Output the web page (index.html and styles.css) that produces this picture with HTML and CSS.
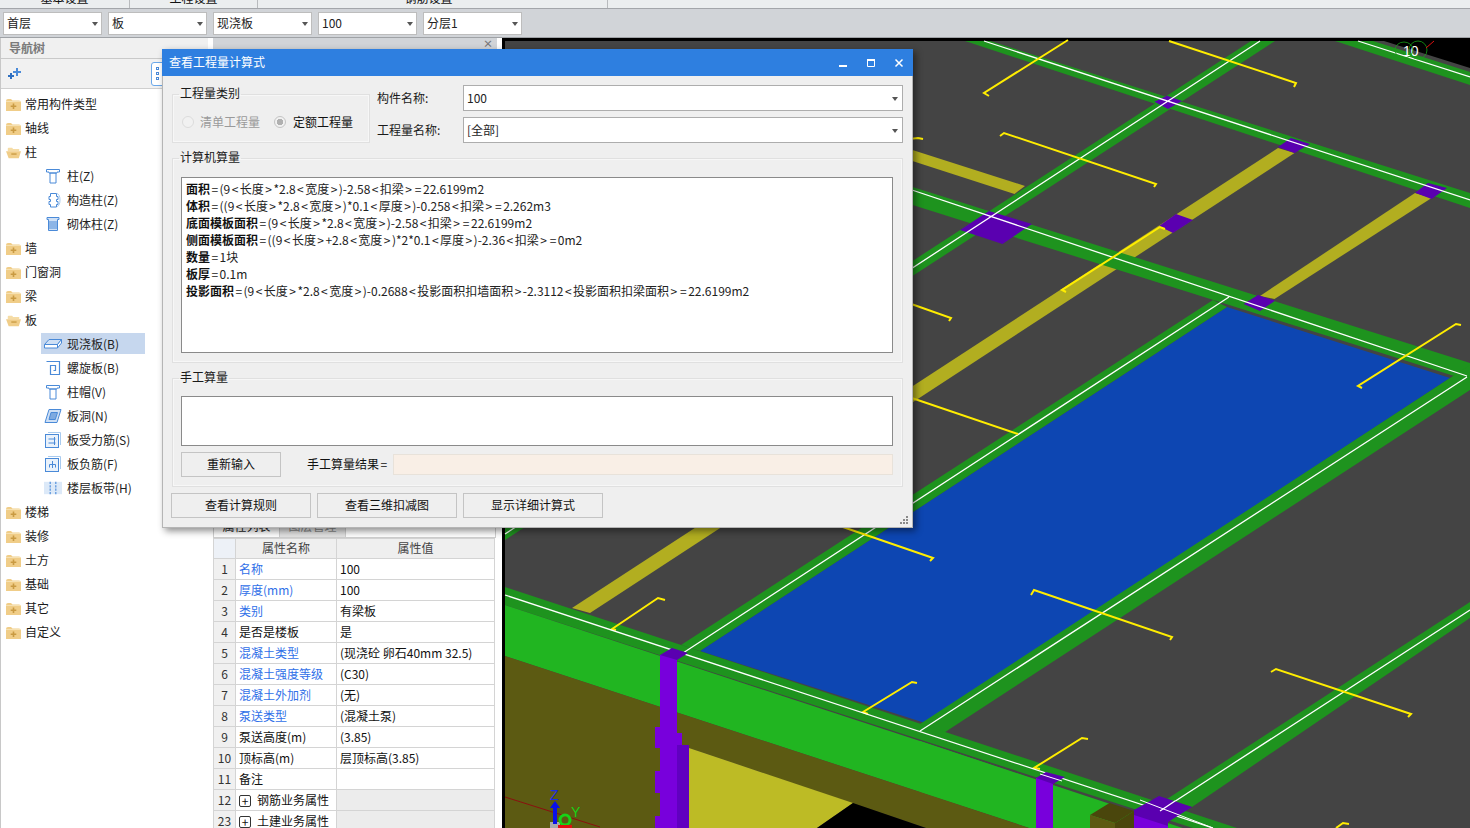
FILE: index.html
```html
<!DOCTYPE html>
<html lang="zh">
<head>
<meta charset="utf-8">
<title>查看工程量计算式</title>
<link rel="stylesheet" href="styles.css">
</head>
<body>
<svg class="defs" width="0" height="0" aria-hidden="true">
  <symbol id="fc" viewBox="0 0 15 13"><path d="M0 3q0-2 2-2h3l1.500 1.500H13q2 0 2 2V13H0z" fill="#f0cd88"/><path d="M0 4h15V3.200H0z" fill="#f8e6bd"/><path d="M6.700 5.500h1.600v2h2v1.600h-2v2H6.700v-2h-2V7.500h2z" fill="#c99a42"/></symbol>
  <symbol id="fo" viewBox="0 0 17 13"><path d="M2 2q0-1 1-1h4l1 1.500h7V5H2z" fill="#f5dca6"/><path d="M0 5h17l-2.500 8H3z" fill="#f0cd88"/><path d="M6 7.500h6v1.500H6z" fill="#c99a42"/></symbol>
  <symbol id="i-col" viewBox="0 0 16 16"><path d="M1.500 1.500h13v2.500h-2.500v1h-8V4H1.500zM5 5h6v10H5z" fill="#fff" stroke="#4a8ad8"/></symbol>
  <symbol id="i-gz" viewBox="0 0 16 16"><path d="M12 1.500q3 1 3 6.500t-3 6.500" fill="none" stroke="#a9cbef"/><path d="M5.500 1.500h6v3h1.500v3h-1.500v2h1.500v3h-1.500v2.500h-6v-2.500H4v-3h1.500v-2H4v-3h1.500z" fill="#fff" stroke="#4a8ad8"/></symbol>
  <symbol id="i-qt" viewBox="0 0 16 16"><path d="M2 1.500h12v2h-1.500v11h-9v-11H2z" fill="#cfe0f5" stroke="#4a8ad8"/><path d="M4 6h8M4 8h8M4 10h8M4 12h8" stroke="#4a8ad8"/></symbol>
  <symbol id="i-plate" viewBox="0 0 18 16"><path d="M.5 8.500 5 3.500h12.500l-4 5z" fill="#cfe0f5" stroke="#4a8ad8"/><path d="M.5 8.500h13v3.500H.5zM13.500 8.500l4-5v3.500l-4 5z" fill="#fff" stroke="#4a8ad8"/></symbol>
  <symbol id="i-spiral" viewBox="0 0 16 16"><path d="M1.500 1.500h13v13h-9v-9h5v5h-2" fill="none" stroke="#4a8ad8" stroke-width="1.200"/></symbol>
  <symbol id="i-hole" viewBox="0 0 18 16"><path d="M5 1.500h12l-4 13H1z" fill="#cfe0f5" stroke="#4a8ad8"/><path d="M7 4.500h6.500l-2.200 7H5z" fill="#7eaae0" stroke="#4a8ad8"/></symbol>
  <symbol id="i-rebar" viewBox="0 0 16 16"><path d="M3 .5h12.500v12.500" fill="none" stroke="#a9cbef"/><rect x=".5" y="2.500" width="13" height="13" fill="#eaf2fb" stroke="#4a8ad8"/><path d="M3.500 7h7M3.500 11h7M9.500 5v8" fill="none" stroke="#4a8ad8"/></symbol>
  <symbol id="i-neg" viewBox="0 0 16 16"><path d="M3 .5h12.500v12.500" fill="none" stroke="#a9cbef"/><rect x=".5" y="2.500" width="13" height="13" fill="#eaf2fb" stroke="#4a8ad8"/><path d="M7.500 5v7M4.500 8.500h6M4.500 8.500v3M10.500 8.500v3" fill="none" stroke="#4a8ad8"/></symbol>
  <symbol id="i-band" viewBox="0 0 16 14"><rect x="0" y="1.500" width="16" height="11" fill="#dce9f8"/><path d="M5.500 1.500v11M10.500 1.500v11" stroke="#4a8ad8" stroke-dasharray="2 1"/></symbol>
</svg>

<div class="tabs">
  <div class="tab tab-a">基本设置</div>
  <div class="tab tab-b">工程设置</div>
  <div class="tab tab-c">钢筋设置</div>
</div>

<div class="toolbar">
  <div class="combo"><span>首层</span><i class="arrow"></i></div>
  <div class="combo"><span>板</span><i class="arrow"></i></div>
  <div class="combo"><span>现浇板</span><i class="arrow"></i></div>
  <div class="combo"><span>100</span><i class="arrow"></i></div>
  <div class="combo"><span>分层1</span><i class="arrow"></i></div>
</div>

<div class="main">
  <nav class="nav">
    <div class="nav-head">导航树</div>
    <div class="nav-tools">
      <svg class="sparkle" width="14" height="12" viewBox="0 0 14 12"><path d="M9 0h2v3h3v2h-3v3H9V5H6V3h3z" fill="#4a8ad8"/><path d="M3 5h2v2h2v2H5v2H3V9H1V7h2z" fill="#2f6fc0"/></svg>
      <div class="nav-btn"><i></i><i></i><i></i></div>
    </div>
    <ul class="tree">
      <li class="row"><svg class="folder"><use href="#fc"/></svg>常用构件类型</li>
      <li class="row"><svg class="folder"><use href="#fc"/></svg>轴线</li>
      <li class="row"><svg class="folder"><use href="#fo"/></svg>柱</li>
      <li class="sub"><svg class="ico"><use href="#i-col"/></svg>柱(Z)</li>
      <li class="sub"><svg class="ico"><use href="#i-gz"/></svg>构造柱(Z)</li>
      <li class="sub"><svg class="ico"><use href="#i-qt"/></svg>砌体柱(Z)</li>
      <li class="row"><svg class="folder"><use href="#fc"/></svg>墙</li>
      <li class="row"><svg class="folder"><use href="#fc"/></svg>门窗洞</li>
      <li class="row"><svg class="folder"><use href="#fc"/></svg>梁</li>
      <li class="row"><svg class="folder"><use href="#fo"/></svg>板</li>
      <li class="sub sel"><svg class="ico"><use href="#i-plate"/></svg>现浇板(B)</li>
      <li class="sub"><svg class="ico"><use href="#i-spiral"/></svg>螺旋板(B)</li>
      <li class="sub"><svg class="ico"><use href="#i-col"/></svg>柱帽(V)</li>
      <li class="sub"><svg class="ico"><use href="#i-hole"/></svg>板洞(N)</li>
      <li class="sub"><svg class="ico"><use href="#i-rebar"/></svg>板受力筋(S)</li>
      <li class="sub"><svg class="ico"><use href="#i-neg"/></svg>板负筋(F)</li>
      <li class="sub"><svg class="ico"><use href="#i-band"/></svg>楼层板带(H)</li>
      <li class="row"><svg class="folder"><use href="#fc"/></svg>楼梯</li>
      <li class="row"><svg class="folder"><use href="#fc"/></svg>装修</li>
      <li class="row"><svg class="folder"><use href="#fc"/></svg>土方</li>
      <li class="row"><svg class="folder"><use href="#fc"/></svg>基础</li>
      <li class="row"><svg class="folder"><use href="#fc"/></svg>其它</li>
      <li class="row"><svg class="folder"><use href="#fc"/></svg>自定义</li>
    </ul>
  </nav>

  <section class="props">
    <div class="props-head"><span class="props-x">×</span></div>
    <div class="props-list"></div>
    <div class="props-tabs"><span class="ptab on">属性列表</span><span class="ptab">图层管理</span></div>
    <table class="grid">
      <colgroup><col class="c0"><col class="c1"><col class="c2"></colgroup>
      <thead><tr><th class="corner"></th><th>属性名称</th><th>属性值</th></tr></thead>
      <tbody>
        <tr><td class="n">1</td><td class="b">名称</td><td>100</td></tr>
        <tr><td class="n">2</td><td class="b">厚度(mm)</td><td>100</td></tr>
        <tr><td class="n">3</td><td class="b">类别</td><td>有梁板</td></tr>
        <tr><td class="n">4</td><td>是否是楼板</td><td>是</td></tr>
        <tr><td class="n">5</td><td class="b">混凝土类型</td><td>(现浇砼 卵石40mm 32.5)</td></tr>
        <tr><td class="n">6</td><td class="b">混凝土强度等级</td><td>(C30)</td></tr>
        <tr><td class="n">7</td><td class="b">混凝土外加剂</td><td>(无)</td></tr>
        <tr><td class="n">8</td><td class="b">泵送类型</td><td>(混凝土泵)</td></tr>
        <tr><td class="n">9</td><td>泵送高度(m)</td><td>(3.85)</td></tr>
        <tr><td class="n">10</td><td>顶标高(m)</td><td>层顶标高(3.85)</td></tr>
        <tr><td class="n">11</td><td>备注</td><td></td></tr>
        <tr><td class="n">12</td><td><span class="exp">+</span>钢筋业务属性</td><td class="g"></td></tr>
        <tr><td class="n">23</td><td><span class="exp">+</span>土建业务属性</td><td class="g"></td></tr>
      </tbody>
    </table>
  </section>

  <div class="view">
    <svg class="scene" width="968" height="790" viewBox="502 38 968 790">
      <rect x="502" y="38" width="968" height="790" fill="#000"/>
      <polygon points="505,41 1384,41 1470,68 1470,828 505,828" fill="#444"/>
      <polygon points="1227,307 1450,378 925,723 700,651" fill="#0d46b2"/>
      <g fill="#b2ae20">
        <polygon points="572,608 1278,148 1294.500,153 590,613"/>
        <polygon points="1260,296 1415,193 1431.600,198 1274.500,299"/>
        <polygon points="900,146 1025,186 1014.500,194 900,157"/>
      </g>
      <g fill="#1e931e">
        <polygon points="965,41 990,41 1470,193 1470,208"/>
        <polygon points="1335,41 1373,41 1470,72 1470,85"/>
        <polygon points="900,183 1470,363 1470,381 900,201"/>
        <polygon points="1251,41 1275,41 914,275 505,540 505,525 914,260"/>
        <polygon points="681,645 1213,300 1227,307 700,651"/>
        <polygon points="1450,378 1470,365 1470,390 936,738 920,724"/>
        <polygon points="1167,799 1470,602 1470,618 1192,807"/>
        <polygon points="505,587 1240,829 1236,842 505,605"/>
      </g>
      <g fill="#5a00b0">
        <polygon points="1154.500,101.700 1167,95.700 1182,101 1168,109"/>
        <polygon points="1278,147 1291,138 1310,144 1294.500,153"/>
        <polygon points="1415,192.700 1428,183 1447,188 1431.600,199"/>
        <polygon points="1159,226 1176,214 1193,220 1173,233"/>
        <polygon points="960,230 989,211 1032,224 1002.500,244"/>
        <polygon points="1243.600,304 1258,295 1275,300.700 1260,311"/>
      </g>
      <g stroke="#fff" stroke-width="1.300" fill="none">
        <path d="M984 41 1470 200M1358 41 1470 77M900 186 1467 376M505 534 1260 41M683 653 1229 297M920 731 1467 377M1160 811 1470 610"/>
      </g>
      <g stroke="#ffed00" stroke-width="2" fill="none">
        <polyline points="989,96 984,93 1068,40"/>
        <polyline points="1169,41 1296,83 1294,87"/>
        <polyline points="1000,136 1004,133 1156,184 1154,187"/>
        <polyline points="1066,292 1062,290 1160,227 1165,229"/>
        <polyline points="1362,388 1358,386 1456,324 1461,325"/>
        <polyline points="900,300 951,318 949,321"/>
        <polyline points="900,394 1018,434"/>
        <polyline points="900,140 918,138 923,139"/>
        <polyline points="616,630 612,629 658,598 665,600"/>
        <polyline points="868,714 863,712 912,682 917,683"/>
        <polyline points="1040,769 1034,768 1082,738 1088,739"/>
        <polyline points="840,526 933,558 930,561"/>
        <polyline points="1031,595 1034,590 1172,637 1170,640"/>
        <polyline points="1271,672 1276,669 1411,714 1408,717"/>
        <polyline points="1336,828 1343,823 1349,824"/>
      </g>
      <polygon points="505,605 920,741 1170,825 1240,848 1030,828 920,792 505,656" fill="#21b521"/>
      <polygon points="920,741 1240,847 1236,828 1030,828 920,792" fill="#21b521"/>
      <polygon points="505,656 920,792 1029,828 926,828 689,748 689,828 505,828" fill="#5c5a12"/>
      <polygon points="689,748 853,803 817,828 689,828" fill="#bdbb25"/>
      <polygon points="853,803 926,828 817,828" fill="#000"/>
      <path d="M505 595 1213 828" stroke="#fff" stroke-width="1.300" fill="none"/>
      <polygon points="1090,815 1109.500,803 1134,811 1115,823" fill="#4a460c"/>
      <polygon points="1090,815 1115,823 1115,828 1090,828" fill="#5c5a12"/>
      <polygon points="1115,823 1134,811 1134,828 1115,828" fill="#4a460c"/>
      <g fill="#7800dc">
        <rect x="660" y="655" width="17" height="173"/>
        <rect x="655" y="727" width="5" height="21"/>
        <rect x="655" y="771" width="5" height="22"/>
        <rect x="655" y="816" width="5" height="12"/>
        <rect x="677" y="733" width="5" height="12"/>
        <rect x="1036" y="778" width="17" height="50"/>
        <polygon points="1134,813 1168,823 1168,828 1134,828"/>
      </g>
      <rect x="677" y="745" width="12" height="83" fill="#6000c0"/>
      <g fill="#5a00b0">
        <polygon points="660,655 672,648 688,653 677,660"/>
        <polygon points="1036,778 1046,772 1065,777 1053,784"/>
        <polygon points="1134,810 1159,796 1192,807 1168,822 1168,826 1134,815"/>
      </g>
      <path d="M1040 774 1062 781M1140 800 1213 828" stroke="#fff" stroke-width="1" fill="none"/>
      <path d="M1160 811 1175 801" stroke="#fff" stroke-width="1.300" fill="none"/>
      <path d="M505 797 600 827" stroke="#8a1010" stroke-width="1" fill="none"/>
      <rect x="550" y="822" width="10" height="6" fill="#aaa"/>
      <path d="M553 824V808h-3l5-7 5 7h-3v16z" fill="#0a10e8"/>
      <ellipse cx="565" cy="820" rx="5" ry="5" fill="none" stroke="#17d317" stroke-width="3"/>
      <rect x="558" y="825" width="14" height="3" fill="#e01010"/>
      <text class="ax ax-z" x="550" y="800">Z</text>
      <text class="ax ax-y" x="571" y="817">Y</text>
      <text class="ax ax-n" x="1403" y="56">10</text>
      <ellipse cx="1404" cy="50" rx="9" ry="8" fill="none" stroke="#17a017" stroke-width=".8"/>
      <ellipse cx="1418" cy="50" rx="9" ry="9" fill="none" stroke="#17a017" stroke-width=".8"/>
      <path d="M1426 48 1434 41" stroke="#e01010" fill="none"/>
    </svg>
  </div>
</div>

<div class="dialog">
  <header class="dlg-title">
    <span>查看工程量计算式</span>
    <div class="win">
      <button class="win-b" aria-label="最小化"><svg width="10" height="10" viewBox="0 0 10 10"><rect x="1" y="7" width="8" height="2" fill="#fff"/></svg></button>
      <button class="win-b" aria-label="最大化"><svg width="10" height="10" viewBox="0 0 10 10"><path d="M1.500 2.500h7v6h-7z" fill="none" stroke="#fff"/><rect x="1" y="1" width="8" height="2" fill="#fff"/></svg></button>
      <button class="win-b" aria-label="关闭"><svg width="10" height="10" viewBox="0 0 10 10"><path d="M1.500 1.500l7 7M8.500 1.500l-7 7" stroke="#fff" stroke-width="1.500"/></svg></button>
    </div>
  </header>
  <div class="dlg-body">
    <div class="top-row">
      <fieldset class="grp grp-type">
        <legend>工程量类别</legend>
        <div class="radios">
          <span class="radio off"></span><span class="r-lab dim">清单工程量</span>
          <span class="radio on"></span><span class="r-lab">定额工程量</span>
        </div>
      </fieldset>
      <div class="fields">
        <label class="f-lab">构件名称:</label>
        <div class="select"><span>100</span><i class="arrow"></i></div>
        <label class="f-lab">工程量名称:</label>
        <div class="select"><span>[全部]</span><i class="arrow"></i></div>
      </div>
    </div>
    <fieldset class="grp grp-calc">
      <legend>计算机算量</legend>
      <div class="formula">
        <p><b>面积</b><i>=</i>(9<i>&lt;</i>长度<i>&gt;</i>*2.8<i>&lt;</i>宽度<i>&gt;</i>)-2.58<i>&lt;</i>扣梁<i>&gt;</i><i>=</i>22.6199m2</p>
        <p><b>体积</b><i>=</i>((9<i>&lt;</i>长度<i>&gt;</i>*2.8<i>&lt;</i>宽度<i>&gt;</i>)*0.1<i>&lt;</i>厚度<i>&gt;</i>)-0.258<i>&lt;</i>扣梁<i>&gt;</i><i>=</i>2.262m3</p>
        <p><b>底面模板面积</b><i>=</i>(9<i>&lt;</i>长度<i>&gt;</i>*2.8<i>&lt;</i>宽度<i>&gt;</i>)-2.58<i>&lt;</i>扣梁<i>&gt;</i><i>=</i>22.6199m2</p>
        <p><b>侧面模板面积</b><i>=</i>((9<i>&lt;</i>长度<i>&gt;</i>+2.8<i>&lt;</i>宽度<i>&gt;</i>)*2*0.1<i>&lt;</i>厚度<i>&gt;</i>)-2.36<i>&lt;</i>扣梁<i>&gt;</i><i>=</i>0m2</p>
        <p><b>数量</b><i>=</i>1块</p>
        <p><b>板厚</b><i>=</i>0.1m</p>
        <p><b>投影面积</b><i>=</i>(9<i>&lt;</i>长度<i>&gt;</i>*2.8<i>&lt;</i>宽度<i>&gt;</i>)-0.2688<i>&lt;</i>投影面积扣墙面积<i>&gt;</i>-2.3112<i>&lt;</i>投影面积扣梁面积<i>&gt;</i><i>=</i>22.6199m2</p>
      </div>
    </fieldset>
    <fieldset class="grp grp-manual">
      <legend>手工算量</legend>
      <div class="manual"></div>
      <div class="manual-row">
        <button class="btn btn-re">重新输入</button>
        <span class="m-lab">手工算量结果<i>=</i></span>
        <div class="result"></div>
      </div>
    </fieldset>
    <div class="actions">
      <button class="btn btn-act">查看计算规则</button>
      <button class="btn btn-act">查看三维扣减图</button>
      <button class="btn btn-act">显示详细计算式</button>
    </div>
  </div>
  <svg class="grip" width="9" height="9" viewBox="0 0 9 9"><path d="M6 1h2v2H6zM3 4h2v2H3zM6 4h2v2H6zM0 7h2v2H0zM3 7h2v2H3zM6 7h2v2H6z" fill="#8a8a8a"/></svg>
</div>
</body>
</html>
```

FILE: styles.css
```css
* { box-sizing: border-box; }
html, body { margin: 0; padding: 0; }
body {
  width: 1470px; height: 828px; overflow: hidden; position: relative;
  background: #fff; color: #111;
  font: 12px/16px "Noto Sans CJK SC", "Liberation Sans", sans-serif;
  display: flex; flex-direction: column;
}
button { font: inherit; color: inherit; }
.defs { position: absolute; }

.tabs {
  height: 9px; flex: none; display: flex; overflow: hidden;
  background: #ebeeef; border-bottom: 1px solid #a3a6aa;
}
.tab { margin-top: -10px; height: 19px; line-height: 16px; text-align: center; font-size: 12px; border-right: 1px solid #b8bbbd; }
.tab-a { width: 130px; }
.tab-b { width: 128px; }
.tab-c { width: 350px; padding-right: 8px; }

.toolbar {
  height: 29px; flex: none; display: flex; gap: 6px; align-items: flex-start;
  padding: 3px 0 0 3px; background: #d1d4d8; border-bottom: 1px solid #9fa2a6;
}
.combo {
  width: 99px; height: 23px; background: #fff; border: 1px solid #bdbdbd;
  display: flex; align-items: center; justify-content: space-between; padding: 0 3px 2px 3px;
  font-size: 12px; color: #222;
}
.arrow { width: 0; height: 0; border: 3.500px solid transparent; border-top: 4px solid #555; border-bottom: 0; margin-top: 2px; }

.main { flex: 1; display: flex; min-height: 0; }

.nav { width: 210px; flex: none; border-left: 1px solid #c8c8c8; display: flex; flex-direction: column; }
.nav-head { height: 21px; line-height: 20px; padding-left: 8px; color: #7a7a7a; font-weight: 700; background: #f0f0f0; border-bottom: 1px solid #c9c9c9; margin-right: 2px; }
.nav-tools { height: 30px; background: #f1f1f1; border-bottom: 1px solid #cfcfcf; display: flex; align-items: center; padding-left: 6px; margin-right: 2px; }
.sparkle { flex: none; }
.nav-btn { width: 30px; height: 24px; margin-left: 130px; border: 1px solid #6aa8ea; border-radius: 3px; background: #fff; display: flex; flex-direction: column; justify-content: space-around; padding: 3px 0 3px 4px; }
.nav-btn i { width: 3px; height: 3px; border: 1px solid #4a8ad8; display: block; }
.tree { list-style: none; margin: 0; padding: 3px 0 0; display: flex; flex-direction: column; }
.row { height: 24px; flex: none; display: flex; align-items: center; padding-left: 5px; gap: 4px; color: #1a1a1a; }
.folder { width: 15px; height: 13px; flex: none; }
.sub { height: 21px; flex: none; margin: 1px 0 2px 40px; width: 104px; display: flex; align-items: center; padding-left: 3px; gap: 5px; color: #222; }
.sub.sel { background: #c6d7ee; }
.ico { width: 18px; height: 16px; flex: none; }

.props { width: 286px; margin-left: 2px; flex: none; display: flex; flex-direction: column; overflow: hidden; padding-left: 1px; }
.props-head { height: 11px; flex: none; background: #d1d4d8; position: relative; overflow: visible; margin-right: 1px; }
.props-x { position: absolute; right: 4px; top: -1px; color: #777; font-size: 10px; line-height: 13px; font-weight: 700; }
.props-list { height: 470px; flex: none; }
.props-tabs { height: 19px; flex: none; display: flex; border-bottom: 1px solid #cfcfcf; border-left: 1px solid #cfcfcf; border-right: 1px solid #cfcfcf; margin-right: 2px; overflow: hidden; }
.ptab { width: 66px; text-align: center; line-height: 14px; color: #222; border-right: 1px solid #cfcfcf; }
.ptab + .ptab { background: #e3e3e3; color: #888; }
.grid { border-collapse: collapse; table-layout: fixed; width: 282px; flex: none; font-size: 12px; border-left: 1px solid #d4d4d4; }
.c0 { width: 22px; }
.c1 { width: 101px; }
.grid th, .grid td { border: 1px solid #d4d4d4; height: 21px; padding: 0 0 0 3px; white-space: nowrap; overflow: hidden; line-height: 18px; }
.grid th { height: 20px; background: #efefef; font-weight: 400; color: #444; text-align: center; padding: 0 0 1px; }
.grid .corner { background: #edf1f7; }
.grid td.n { background: #f0f0f0; text-align: center; color: #333; padding: 0; }
.grid td.b { color: #2f6fe8; }
.grid td.g { background: #ececec; }
.exp { display: inline-block; width: 12px; height: 12px; border: 1px solid #333; border-radius: 2px; line-height: 9px; text-align: center; margin: 0 6px 0 0; vertical-align: -1px; font-size: 12px; }

.view { flex: none; width: 968px; margin-left: 4px; }
.scene { display: block; }
.ax { font-family: "Liberation Sans", sans-serif; font-size: 14px; }
.ax-z { fill: #1a2ce8; }
.ax-y { fill: #17d317; }
.ax-n { fill: #fff; font-weight: 400; font-size: 14px; }

.dialog {
  position: absolute; left: 162px; top: 49px; width: 751px; height: 479px;
  background: #efefef; border: 1px solid #b5b5b5; border-top: 0;
  box-shadow: 3px 3px 7px rgba(0,0,0,.45);
}
.dlg-title { height: 27px; margin: 0 -1px; background: #2e7fe0; color: #fff; display: flex; align-items: center; padding: 0 0 0 7px; font-size: 12px; }
.dlg-title > span { margin-top: -2px; }
.win { margin-left: auto; display: flex; }
.win-b { width: 28px; height: 27px; background: none; border: 0; padding: 0; display: flex; align-items: center; justify-content: center; }
.dlg-body { padding: 9px 9px 0 9px; display: flex; flex-direction: column; }
.top-row { display: flex; height: 58px; gap: 7px; flex: none; }
.grp { margin: 0; padding: 0 9px 0 8px; border: 1px solid #e0e0e0; box-shadow: inset 0 0 0 1px #f7f7f7; min-width: 0; flex: none; }
.grp legend { margin-left: -2px; padding: 0 1px; height: 12px; line-height: 10px; font-size: 12px; color: #1a1a1a; }
.grp-type { width: 198px; height: 55px; margin-top: 3px; padding-left: 9px; }
.grp-type legend { margin-left: -3px; }
.radios { display: flex; align-items: center; margin-top: 15px; height: 14px; }
.radio { width: 12px; height: 12px; border-radius: 50%; border: 1px solid #dcdcdc; background: #f1f1f1; flex: none; }
.radio.on { border-color: #c4c4c4; margin-left: 14px; background: radial-gradient(circle, #b0b0b0 0 3px, #f1f1f1 3.500px); }
.r-lab { margin-left: 6px; white-space: nowrap; }
.r-lab:last-child { margin-left: 7px; }
.dim { color: #9a9a9a; }
.fields { flex: 1; display: grid; grid-template-columns: 86px 1fr; row-gap: 6px; grid-auto-rows: 26px; align-items: center; }
.f-lab { color: #1a1a1a; }
.select { height: 26px; background: #fff; border: 1px solid #adadad; display: flex; align-items: center; justify-content: space-between; padding: 0 4px 0 3px; color: #222; }
.grp-calc { height: 211px; margin-top: 9px; }
.formula { margin-top: 13px; height: 176px; background: #fff; border: 1px solid #8a8a8a; padding: 2px 4px; }
.formula p { margin: 0; line-height: 17px; white-space: nowrap; color: #222; }
.formula b { color: #111; }
.formula i, .m-lab i { font-style: normal; padding: 0 1.450px; }
.grp-manual { height: 115px; margin-top: 9px; }
.manual { margin-top: 12px; height: 50px; background: #fff; border: 1px solid #8a8a8a; }
.manual-row { display: flex; align-items: center; margin-top: 6px; height: 25px; }
.btn { background: #efefef; border: 1px solid #c4c4c4; padding: 0 0 2px; text-align: center; }
.btn-re { width: 100px; height: 25px; flex: none; }
.m-lab { margin: -2px 0 0 26px; width: 80px; flex: none; white-space: nowrap; }
.result { margin-left: 6px; flex: 1; height: 21px; background: #f9efe6; border: 1px solid #e8e2da; }
.actions { display: flex; gap: 6px; margin: 6px 0 0 -1px; }
.btn-act { width: 140px; height: 25px; }
.grip { position: absolute; right: 3px; bottom: 3px; }
```
